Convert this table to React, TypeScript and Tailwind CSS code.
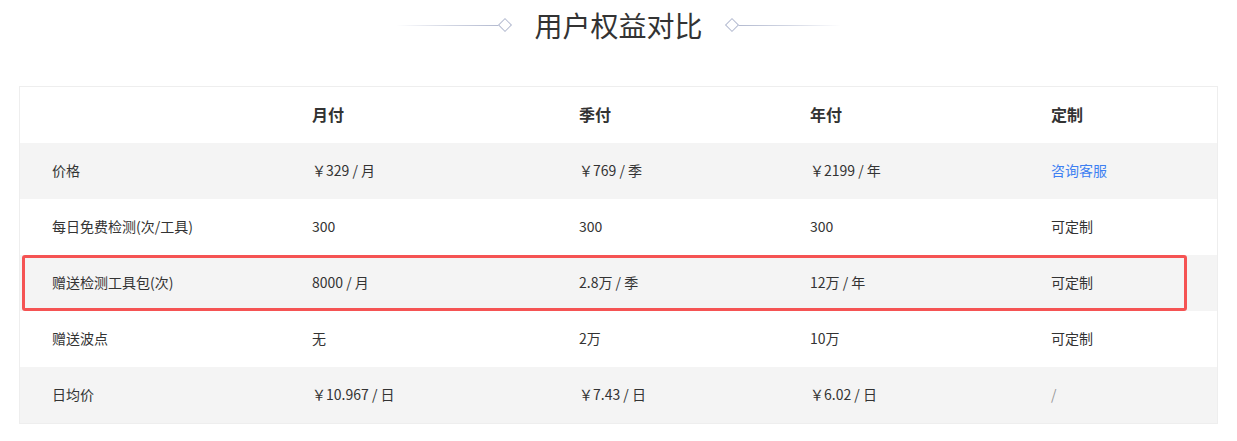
import { clsx as cn } from 'clsx'

type Row = { label: string; cells: string[]; highlight?: boolean }

const ROWS: Row[] = [
  { label: '价格', cells: ['￥329 / 月', '￥769 / 季', '￥2199 / 年', '咨询客服'] },
  { label: '每日免费检测(次/工具)', cells: ['300', '300', '300', '可定制'] },
  { label: '赠送检测工具包(次)', cells: ['8000 / 月', '2.8万 / 季', '12万 / 年', '可定制'], highlight: true },
  { label: '赠送波点', cells: ['无', '2万', '10万', '可定制'] },
  { label: '日均价', cells: ['￥10.967 / 日', '￥7.43 / 日', '￥6.02 / 日', '/'] },
]

const HEADS = ['月付', '季付', '年付', '定制']

const GRID = 'grid grid-cols-[260px_267px_231px_241px_1fr]'

function Diamond() {
  return <span className="block w-[10px] h-[10px] rotate-45 border border-[#b3bad0] bg-white" />
}

export default function App() {
  return (
    <div
      className="w-[1237px] h-[441px] bg-white text-[#333]"
      style={{ fontFamily: '"Noto Sans CJK SC", "Noto Sans", sans-serif' }}
    >
      {/* title */}
      <div className="flex items-center justify-center h-[50px]">
        <div className="w-[104px] h-px bg-gradient-to-r from-white via-[#d3d7e4] to-[#b3bad0]" />
        <Diamond />
        <h1 className="mx-[24px] text-[28px] leading-none font-normal text-[#333] -mt-[1px]">用户权益对比</h1>
        <Diamond />
        <div className="w-[104px] h-px bg-gradient-to-r from-[#b3bad0] via-[#d3d7e4] to-white" />
      </div>

      <div className="mx-[19px] mt-[36px] border border-[#eee]">
        <div className={cn(GRID, 'h-[56px] items-center text-[16px] font-bold pb-[2px]')}>
          <div />
          {HEADS.map(h => (
            <div key={h} className="pl-[32px]">{h}</div>
          ))}
        </div>

        {ROWS.map((r, i) => (
          <div
            key={r.label}
            className={cn(GRID, 'relative h-[56px] items-center text-[14px] pb-[2px]', i % 2 === 0 ? 'bg-[#f4f4f4]' : 'bg-white')}
          >
            <div className="pl-[32px]">{r.label}</div>
            {r.cells.map((c, j) => (
              <div
                key={j}
                className={cn(
                  'pl-[32px]',
                  c === '咨询客服' && 'text-[#3d7ff2]',
                  c === '/' && 'text-[#999]'
                )}
              >
                {c}
              </div>
            ))}
            {/* highlighted row frame */}
            {r.highlight && (
              <div className="absolute left-[2px] right-[30px] top-0 bottom-0 border-[3px] border-[#f55353] rounded-[3px] pointer-events-none" />
            )}
          </div>
        ))}
      </div>
    </div>
  )
}
